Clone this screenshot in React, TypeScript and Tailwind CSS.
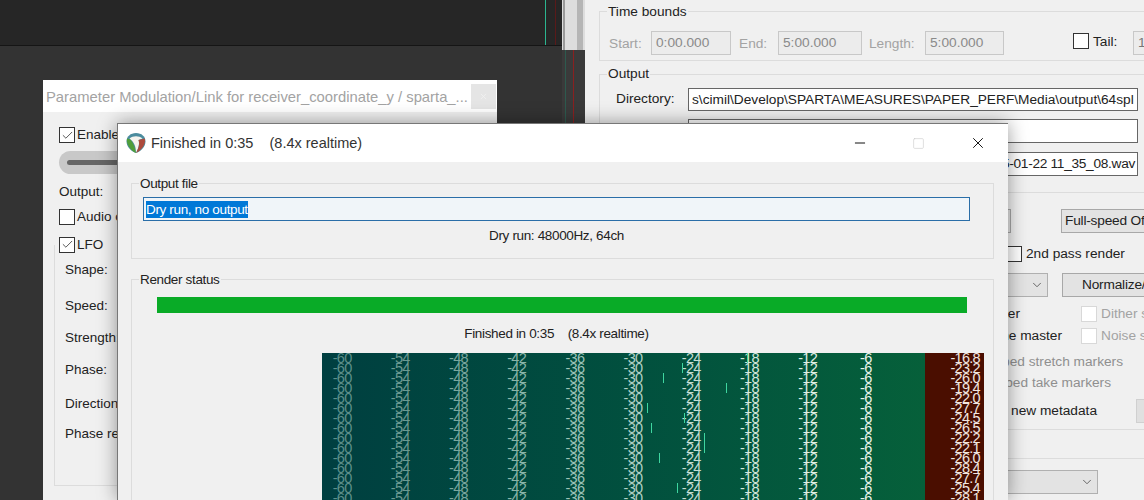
import { Check, ChevronDown, Minus, Square, X } from 'lucide-react';

const SCALE = [
  { label: '-60', color: 'text-[#5d8f8a]' },
  { label: '-54', color: 'text-[#6b9a92]' },
  { label: '-48', color: 'text-[#7ba89f]' },
  { label: '-42', color: 'text-[#8ab5aa]' },
  { label: '-36', color: 'text-[#9cc4b8]' },
  { label: '-30', color: 'text-[#b0d2c6]' },
  { label: '-24', color: 'text-[#c4ded2]' },
  { label: '-18', color: 'text-[#d4e8de]' },
  { label: '-12', color: 'text-[#e0efe6]' },
  { label: '-6', color: 'text-[#e8f4ec]' },
];

const PEAKS = ['-16.8', '-23.2', '-26.0', '-19.4', '-22.0', '-27.7', '-24.5', '-26.5', '-22.2', '-22.1', '-26.0', '-28.4', '-27.7', '-25.4', '-28.1'];

// x offset of the little level tick per row, measured from the meter's left edge
const TICKS: Record<number, number> = { 0: 425, 1: 360, 2: 341, 3: 404, 5: 325, 6: 362, 7: 329, 8: 382, 9: 382, 10: 337, 13: 355 };

const LFO_ROWS = [
  { label: 'Shape:', gap: 'mt-[17px]' },
  { label: 'Speed:', gap: 'mt-[20px]' },
  { label: 'Strength:', gap: 'mt-[16px]' },
  { label: 'Phase:', gap: 'mt-[16px]' },
  { label: 'Direction:', gap: 'mt-[18px]' },
  { label: 'Phase reset:', gap: 'mt-[14px]' },
];

function Tick({ checked = false, faint = false }: { checked?: boolean; faint?: boolean }) {
  return (
    <span className={`flex w-4 h-4 shrink-0 items-center justify-center border bg-white ${faint ? 'border-[#d8d8d8]' : 'border-[#333]'}`}>
      {checked && <Check size={13} strokeWidth={1.5} className="text-[#333]" />}
    </span>
  );
}

function TimeField({ label, value, labelWidth, boxWidth }: { label: string; value: string; labelWidth: string; boxWidth: string }) {
  return (
    <>
      <span className={`${labelWidth} shrink-0 leading-[22px] text-[#a3a3a3]`}>{label}</span>
      <span className={`${boxWidth} h-6 shrink-0 border border-[#c8c8c8] bg-[#ececec] pl-1 leading-[22px] text-[#8a8a8a]`}>{value}</span>
    </>
  );
}

function ReaperLogo() {
  return (
    <svg width="22" height="22" viewBox="0 0 22 22" className="shrink-0">
      <path d="M11 1 C16.5 1 20.5 4.5 20.5 9.5 C20.5 14.5 16 19.5 11 21 C6 19.5 1.5 14.5 1.5 9.5 C1.5 4.5 5.5 1 11 1 Z" fill="#4c8c9e" />
      <path d="M2 6.5 C1 12 5.5 18.5 11 21 C10 16 8.5 11 5.5 7.5 Z" fill="#4f9e3a" />
      <path d="M4.5 6.5 C8 3.5 14 3.5 17.5 6.5 L13.5 8 C15 12 13 17 11 21 C11 15 9.5 10.5 4.5 6.5 Z" fill="#f6f4ee" />
      <path d="M13.5 8 L19.8 6.5 C21 12 17 18 11 21 C13.5 17 15 12 13.5 8 Z" fill="#ad4a3c" />
    </svg>
  );
}

function RightWindow() {
  return (
    <div className="absolute left-[585px] top-0 flex w-[559px] flex-col bg-[#f0f0f0] pb-[20px] text-[13.7px] text-[#222]">
      <div className="relative ml-[14px] mt-[11px] flex h-[50px] w-[600px] shrink-0 items-end border border-[#dcdcdc] pb-[5px] pl-[9px]">
        <span className="absolute -top-[8px] left-[7px] bg-[#f0f0f0] px-px leading-4">Time bounds</span>
        <TimeField label="Start:" value="0:00.000" labelWidth="w-[42px]" boxWidth="w-[80px]" />
        <span className="w-[8px] shrink-0" />
        <TimeField label="End:" value="5:00.000" labelWidth="w-[39px]" boxWidth="w-[84px]" />
        <span className="w-[7px] shrink-0" />
        <TimeField label="Length:" value="5:00.000" labelWidth="w-[56px]" boxWidth="w-[79px]" />
        <span className="w-[69px] shrink-0" />
        <span className="mb-[6px]"><Tick /></span>
        <span className="mb-[2px] ml-1 w-[40px] shrink-0 leading-[22px]">Tail:</span>
        <span className="h-6 w-[30px] shrink-0 border border-[#c8c8c8] bg-[#ececec] pl-1 leading-[22px] text-[#777]">10</span>
      </div>

      <div className="relative ml-[14px] mt-[13px] h-[119px] w-[600px] shrink-0 border border-[#dcdcdc]">
        <span className="absolute -top-[9px] left-[7px] bg-[#f0f0f0] px-px leading-4">Output</span>
        <div className="ml-[16px] mt-[13px] flex items-center">
          <span className="w-[72px] shrink-0">Directory:</span>
          <span className="h-[23px] w-[450px] shrink-0 overflow-hidden whitespace-nowrap border border-[#666] bg-white pl-[3px] leading-[21px]">s\cimil\Develop\SPARTA\MEASURES\PAPER_PERF\Media\output\64spl</span>
        </div>
        <div className="ml-[88px] mt-[8px] h-6 w-[450px] border border-[#666] bg-white" />
        <div className="ml-[88px] mt-[9px] h-6 w-[450px] overflow-hidden whitespace-nowrap border border-[#666] bg-white pr-[2px] text-right leading-[22px] tracking-[-0.3px]">2025-01-22 11_35_08.wav</div>
      </div>

      <div className="mt-[16px] flex h-6 shrink-0 items-center">
        <span className="ml-[340px] h-6 w-[86px] shrink-0 border border-[#a8a8a8] bg-[#e3e3e3]" />
        <span className="ml-[50px] h-6 w-[100px] shrink-0 overflow-hidden whitespace-nowrap border border-[#a8a8a8] bg-[#e3e3e3] pl-[3px] leading-[22px] tracking-[-0.2px]">Full-speed Offline</span>
      </div>

      <div className="mt-[13px] flex h-[16px] shrink-0 items-center pl-[421px]">
        <Tick />
        <span className="ml-1 whitespace-nowrap">2nd pass render</span>
      </div>

      <div className="mt-[11px] flex h-6 shrink-0 items-center">
        <span className="ml-[340px] flex h-6 w-[123px] shrink-0 items-center justify-end border border-[#b0b0b0] bg-[#e3e3e3] pr-[3px]">
          <ChevronDown size={14} strokeWidth={1.5} className="text-[#555]" />
        </span>
        <span className="ml-[14px] h-6 w-[120px] shrink-0 overflow-hidden whitespace-nowrap border border-[#a8a8a8] bg-[#e3e3e3] pl-[19px] leading-[22px] tracking-[-0.2px]">Normalize/Limit...</span>
      </div>

      <div className="mt-[9px] flex h-4 shrink-0 items-center">
        <span className="w-[435px] shrink-0 text-right">Render master</span>
        <span className="ml-[61px] shrink-0"><Tick faint /></span>
        <span className="ml-1 whitespace-nowrap text-[#a3a3a3]">Dither stuff</span>
      </div>
      <div className="mt-[6px] flex h-4 shrink-0 items-center">
        <span className="w-[477px] shrink-0 text-right">Limit to fit the master</span>
        <span className="ml-[19px] shrink-0"><Tick faint /></span>
        <span className="ml-1 whitespace-nowrap text-[#a3a3a3]">Noise shape</span>
      </div>

      <div className="mt-[10px] text-right text-[#8f8f8f]">
        <div className="w-[538px] whitespace-nowrap leading-4">Embed stretch markers</div>
        <div className="mt-[5px] w-[526px] whitespace-nowrap leading-4">Embed take markers</div>
      </div>

      <div className="mt-[8px] flex h-6 shrink-0 items-center">
        <span className="w-[512px] shrink-0 whitespace-nowrap text-right">Add new metadata</span>
        <span className="ml-[39px] h-6 w-[20px] shrink-0 border border-[#d0d0d0] bg-[#e0e0e0]" />
      </div>

      <div className="ml-[300px] mt-[6px] h-px w-[259px] shrink-0 bg-[#dcdcdc]" />
      <div className="ml-[300px] mt-[28px] h-px w-[259px] shrink-0 bg-[#dcdcdc]" />

      <div className="ml-[340px] mt-[11px] flex h-6 w-[173px] shrink-0 items-center justify-end border border-[#b0b0b0] bg-[#e3e3e3] pr-[3px]">
        <ChevronDown size={14} strokeWidth={1.5} className="text-[#555]" />
      </div>
    </div>
  );
}

function ModulationWindow() {
  return (
    <div className="absolute left-[43px] top-[80px] flex h-[440px] w-[454px] flex-col bg-[#f0f0f0] text-[13.5px] text-[#222]">
      <div className="flex h-[32px] shrink-0 items-center justify-between bg-white pl-[3px] pr-px">
        <span className="mt-[3px] whitespace-nowrap text-[14.8px] text-[#a3a3a3]">Parameter Modulation/Link for receiver_coordinate_y / sparta_...</span>
        <span className="flex h-[25px] w-[25px] shrink-0 items-center justify-center bg-[#e5e5e5]">
          <X size={9} className="text-[#f2f2f2]" />
        </span>
      </div>
      <div className="ml-4 mt-[13px] flex items-center gap-[2px]">
        <Tick checked />
        <span>Enable</span>
      </div>
      <div className="ml-4 mt-[6px] flex h-[23px] w-[120px] shrink-0 items-center rounded-full bg-[#c8c8c8] px-2">
        <span className="h-[5px] w-full rounded-full bg-[#666]" />
      </div>
      <span className="ml-4 mt-[10px] leading-4">Output:</span>
      <div className="ml-4 mt-[7px] flex items-center gap-[2px]">
        <Tick />
        <span>Audio control signal</span>
      </div>
      <div className="relative z-10 ml-4 mt-[7px] flex items-center gap-[2px]">
        <Tick checked />
        <span>LFO</span>
      </div>
      <div className="ml-[11px] -mt-[10px] h-[241px] w-[300px] shrink-0 border border-t-0 border-[#dcdcdc] pl-[10px]">
        {LFO_ROWS.map((row) => (
          <div key={row.label} className={`${row.gap} leading-4`}>{row.label}</div>
        ))}
      </div>
      <div className="ml-4 mt-[12px] flex items-center gap-[2px]">
        <Tick />
        <span>Link from MIDI</span>
      </div>
    </div>
  );
}

function Meter() {
  return (
    <div className="ml-[190px] mt-[11px] flex h-[150px] w-[662px] shrink-0 overflow-hidden text-[14.5px] leading-[10px] tracking-[-0.7px]">
      <div className="relative w-[603px] overflow-hidden bg-gradient-to-r from-[#003f40] to-[#06603a]">
        {PEAKS.map((_, i) => (
          <div key={i} className="relative h-[10px]">
            <div className="-ml-[9px] flex">
              {SCALE.map((s) => (
                <span key={s.label} className={`w-[58.2px] shrink-0 text-center ${s.color}`}>{s.label}</span>
              ))}
            </div>
            {TICKS[i] !== undefined && (
              <span className="absolute top-0 h-[10px] w-px bg-[#3fd6a0]" style={{ left: TICKS[i] }} />
            )}
          </div>
        ))}
      </div>
      <div className="w-[59px] bg-[#4a0e00] pr-1 text-right text-[#f2e6e0]">
        {PEAKS.map((p, i) => (
          <div key={i} className="h-[10px]">{p}</div>
        ))}
      </div>
    </div>
  );
}

function RenderWindow() {
  return (
    <div className="absolute left-[117px] top-[123px] flex h-[377px] w-[891px] flex-col border-l border-t border-[#777] bg-[#f0f0f0] text-[13.5px] tracking-[-0.35px] text-[#222] shadow-[0_0_18px_rgba(0,0,0,0.4)]">
      <div className="flex h-[38px] shrink-0 items-center bg-white pl-[7px]">
        <ReaperLogo />
        <span className="ml-[4px] mt-[1px] whitespace-pre text-[14.5px] tracking-normal text-[#333]">Finished in 0:35    (8.4x realtime)</span>
        <span className="ml-auto flex items-center">
          <Minus size={16} strokeWidth={1.5} className="text-[#111]" />
          <Square size={13} strokeWidth={1} className="ml-[44px] text-[#c4c4c4]" />
          <X size={18} strokeWidth={1.3} className="ml-[44px] mr-[21px] text-[#111]" />
        </span>
      </div>

      <div className="relative ml-[13px] mt-[21px] h-[76px] w-[863px] shrink-0 border border-[#dcdcdc]">
        <span className="absolute -top-[8px] left-[7px] bg-[#f0f0f0] px-px leading-4">Output file</span>
        <div className="ml-[11px] mt-[13px] flex h-[24px] w-[827px] items-center border border-[#2a6ea8] bg-[#f0f5f9] pl-[2px]">
          <span className="bg-[#0078d7] leading-[17px] text-white">Dry run, no output</span>
        </div>
        <div className="mt-[7px] w-[849px] text-center leading-4">Dry run: 48000Hz, 64ch</div>
      </div>

      <div className="relative ml-[13px] mt-[20px] h-[260px] w-[863px] shrink-0 border border-b-0 border-[#dcdcdc]">
        <span className="absolute -top-[8px] left-[7px] bg-[#f0f0f0] px-px leading-4">Render status</span>
        <div className="ml-[25px] mt-[17px] h-[16px] w-[810px] bg-[#09ab27]" />
        <div className="mt-[13px] w-[849px] whitespace-pre text-center leading-4">Finished in 0:35    (8.4x realtime)</div>
        <Meter />
      </div>
    </div>
  );
}

export default function App() {
  return (
    <div className="relative h-[500px] w-[1144px] overflow-hidden bg-[#333333] font-['Liberation_Sans',sans-serif]">
      {/* project window behind everything */}
      <div className="flex h-[46px] w-[562px] justify-start border-b border-[#151515] bg-[#262626]">
        <span className="ml-[545px] h-full w-px bg-[#2bb58f]" />
        <span className="ml-[9px] h-full w-px bg-[#5a1a1a]" />
      </div>
      <div className="absolute left-[562px] top-0 flex h-[50px] w-[23px] bg-[#dddddd]">
        <span className="ml-px h-full w-[2px] bg-[#9a9a9a]" />
        <span className="ml-[12px] h-full w-[6px] bg-[#b5b5b5]" />
      </div>
      <div className="absolute left-[562px] top-[50px] flex h-[450px] w-[23px] bg-[#3a3a3a]">
        <span className="ml-[3px] h-full w-px bg-[#2d5a4e]" />
        <span className="ml-[7px] h-full w-px bg-[#8a2020]" />
      </div>

      <RightWindow />
      <ModulationWindow />
      <RenderWindow />
    </div>
  );
}
